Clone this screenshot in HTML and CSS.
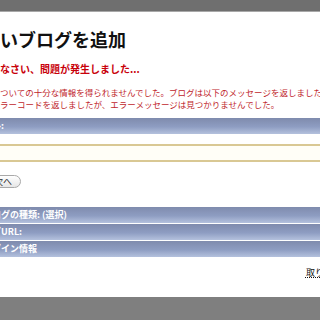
FILE: index.html
```html
<!DOCTYPE html>
<html lang="ja">
<head>
    <meta charset="UTF-8">
    <meta name="viewport" content="width=device-width, initial-scale=1.0">
    <title>新しいブログを追加</title>
    <link rel="stylesheet" href="styles.css">
</head>
<body>
    <div class="topbar"></div>

    <div class="dialog">
        <h1 class="title">新しいブログを追加</h1>
        <p class="error-head">ごめんなさい、問題が発生しました...</p>
        <div class="error-body">
            <p>についての十分な情報を得られませんでした。ブログは以下のメッセージを返しました：</p>
            <p>エラーコードを返しましたが、エラーメッセージは見つかりませんでした。</p>
        </div>

        <div class="bar"><span class="cut4">タイトル</span>:</div>
        <div class="field"></div>

        <div class="buttons">
            <div class="btn">次へ</div>
        </div>

        <div class="bars">
            <div class="bar"><span class="cut2">ブロ</span>グの種類: (選択)</div>
            <div class="bar"><span class="cut3">ブログ</span>URL:</div>
            <div class="bar"><span class="cut2">ログ</span>イン情報</div>
        </div>

        <div class="cancel"><a href="#">取り消し</a></div>
    </div>

    <div class="bottombar"></div>
</body>
</html>
```

FILE: styles.css
```css
body{
    margin: 0;
    width: 320px;
    height: 320px;
    overflow: hidden;
    font-family: "Noto Sans CJK JP", "Liberation Sans", sans-serif;
    background: #fff;
}
.topbar{
    height: 11px;
    background: #6f6f6f;
    border-bottom: 1px solid #a8a8a8;
}
.bottombar{
    height: 23px;
    background: #7f7f7f;
}
/* dialog */
.dialog{
    height: 285px;
    overflow: hidden;
    background: #fff;
}
.title{
    margin: 16px 0 0 -2em;
    font-size: 18px;
    line-height: 22px;
    font-weight: bold;
    color: #111;
    white-space: nowrap;
}
.error-head{
    margin: 12px 0 0 -3em;
    font-size: 10px;
    line-height: 14px;
    font-weight: bold;
    color: #c8000a;
    white-space: nowrap;
}
.error-body{
    margin-top: 10px;
}
.error-body p{
    margin: 0 0 0 -1em;
    font-size: 8.5px;
    line-height: 12px;
    color: #c0262c;
    white-space: nowrap;
}
/* blue header bars */
.bar{
    height: 16px;
    line-height: 16px;
    margin-top: 8px;
    padding-left: 1px;
    font-size: 9px;
    font-weight: bold;
    color: #fff;
    white-space: nowrap;
    background: linear-gradient(#7f8bad, #8e9dc2 55%, #b4c1dd);
}
.cut2{ margin-left: -2em; }
.cut3{ margin-left: -3em; }
.cut4{ margin-left: -4em; }
.field{
    margin-top: 10px;
    height: 14px;
    border-top: 2px solid #d9c894;
    border-bottom: 2px solid #d9c894;
    background: #fffef7;
}
.buttons{
    margin-top: 13px;
    display: flex;
}
.btn{
    height: 11px;
    line-height: 11px;
    margin-left: -15px;
    padding: 0 8px;
    font-size: 9px;
    color: #333;
    border: 1px solid #a9a9a9;
    border-radius: 7px;
    background: linear-gradient(#ffffff, #e6e6e6);
}
.bars{
    margin-top: 19px;
    display: flex;
    flex-direction: column;
    gap: 1px;
}
.bars>.bar{
    margin-top: 0;
}
.cancel{
    margin: 9px -22px 0 0;
    display: flex;
    justify-content: flex-end;
    font-size: 9px;
    line-height: 13px;
}
.cancel a{
    color: #111;
    text-decoration: underline dotted;
}
```
